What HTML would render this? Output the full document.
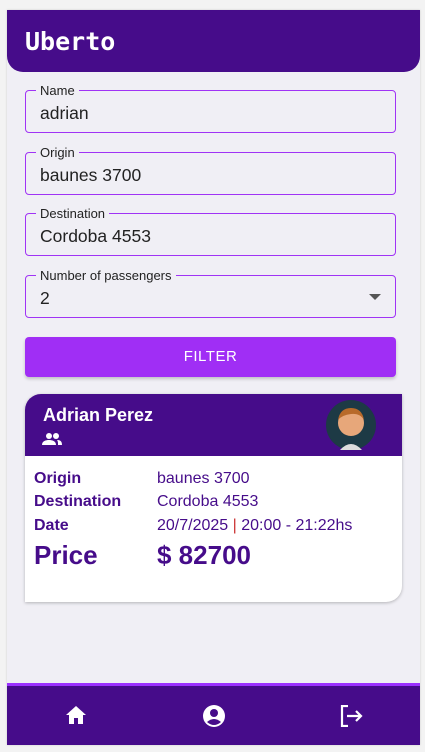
<!DOCTYPE html><html><head><style>
body{margin:0;width:425px;height:752px;background:#f3f3f3;font-family:"Liberation Sans",sans-serif;position:relative;overflow:hidden}
.c{position:absolute;left:7px;top:10px;width:413px;height:735px;background:#f0eff5;box-shadow:0 0 2px #ccc}
.h{position:absolute;left:7px;top:10px;width:413px;height:62px;background:#460c8a;border-radius:0 0 16px 16px}
.h span{position:absolute;left:18px;top:17px;color:#fff;font:bold 25px "DejaVu Sans Mono",monospace}
.f{position:absolute;left:25px;width:369px;height:41px;border:1px solid #a033f5;border-radius:4px}
.f label{position:absolute;left:10px;top:-8px;background:#f0eff5;padding:0 4px;font-size:13px;color:#222}
.f div{position:absolute;left:14px;top:12px;font-size:17.5px;color:#222}
.btn{position:absolute;left:25px;top:337px;width:371px;height:40px;background:#a02ef5;border-radius:4px;color:#fff;font-size:15px;text-align:center;line-height:40px;letter-spacing:.5px;box-shadow:0 2px 3px rgba(0,0,0,.2)}
.card{position:absolute;left:25px;top:394px;width:377px;height:208px;background:#fff;border-radius:16px 0 16px 0;overflow:hidden;box-shadow:0 1px 3px rgba(0,0,0,.25)}
.ch{height:62px;background:#460c8a;position:relative}
.ch b{position:absolute;left:18px;top:11px;color:#fff;font-size:18px}
.r{position:absolute;left:9px;font-size:16px;color:#460c8a}
.r b{display:inline-block;width:123px}
.ft{position:absolute;left:7px;top:683px;width:413px;height:62px;background:#460c8a;border-top:3px solid #9b30ff;box-sizing:border-box}
</style></head><body>
<div class="c"></div>
<div class="h"><span>Uberto</span></div>
<div class="f" style="top:90px"><label>Name</label><div>adrian</div></div>
<div class="f" style="top:152px"><label>Origin</label><div>baunes 3700</div></div>
<div class="f" style="top:213px"><label>Destination</label><div>Cordoba 4553</div></div>
<div class="f" style="top:275px"><label>Number of passengers</label><div>2</div>
<svg style="position:absolute;right:14px;top:18px" width="12" height="6"><path d="M0 0h12L6 6z" fill="#555"/></svg></div>
<div class="btn">FILTER</div>
<div class="card"><div class="ch"><b>Adrian Perez</b>
<svg style="position:absolute;left:17px;top:38px" width="20" height="14" viewBox="0 0 20 14" fill="#fff"><circle cx="7" cy="4" r="3"/><circle cx="14" cy="4" r="3"/><path d="M0 13c0-4 4-5 7-5s7 1 7 5zM15 8c3 0 5 1 5 5h-4c0-2-0-4-1-5z"/></svg>
<svg style="position:absolute;left:301px;top:6px" width="50" height="50"><circle cx="25" cy="25" r="25" fill="#1d3a45"/><circle cx="25" cy="23" r="13" fill="#e7a77a"/><path d="M12 20q2-12 13-12t13 12q-4-7-13-6t-13 6z" fill="#b86a2a"/><path d="M14 50q11-12 22 0z" fill="#ddd"/></svg></div>
<div class="r" style="top:76px"><b>Origin</b>baunes 3700</div>
<div class="r" style="top:99px"><b>Destination</b>Cordoba 4553</div>
<div class="r" style="top:123px"><b>Date</b>20/7/2025 <span style="color:#c33">|</span> 20:00 - 21:22hs</div>
<div class="r" style="top:146px;font-size:26px;font-weight:bold"><b>Price</b>$ 82700</div>
</div>
<div class="ft">
<svg style="position:absolute;left:59px;top:20px" width="20" height="18" viewBox="0 0 20 18" fill="#fff"><path d="M10 0L0 9h3v9h5v-6h4v6h5V9h3z"/></svg>
<svg style="position:absolute;left:196px;top:19px" width="22" height="22" viewBox="0 0 22 22"><circle cx="11" cy="11" r="11" fill="#fff"/><circle cx="11" cy="8" r="4" fill="#460c8a"/><path d="M4 17q7-6 14 0q-7 6-14 0z" fill="#460c8a"/></svg>
<svg style="position:absolute;left:333px;top:19px" width="23" height="22" viewBox="0 0 23 22" fill="none" stroke="#fff" stroke-width="2.2"><path d="M8 1H2v20h6M7 11h14M16 6l5 5-5 5"/></svg>
</div>
</body></html>
